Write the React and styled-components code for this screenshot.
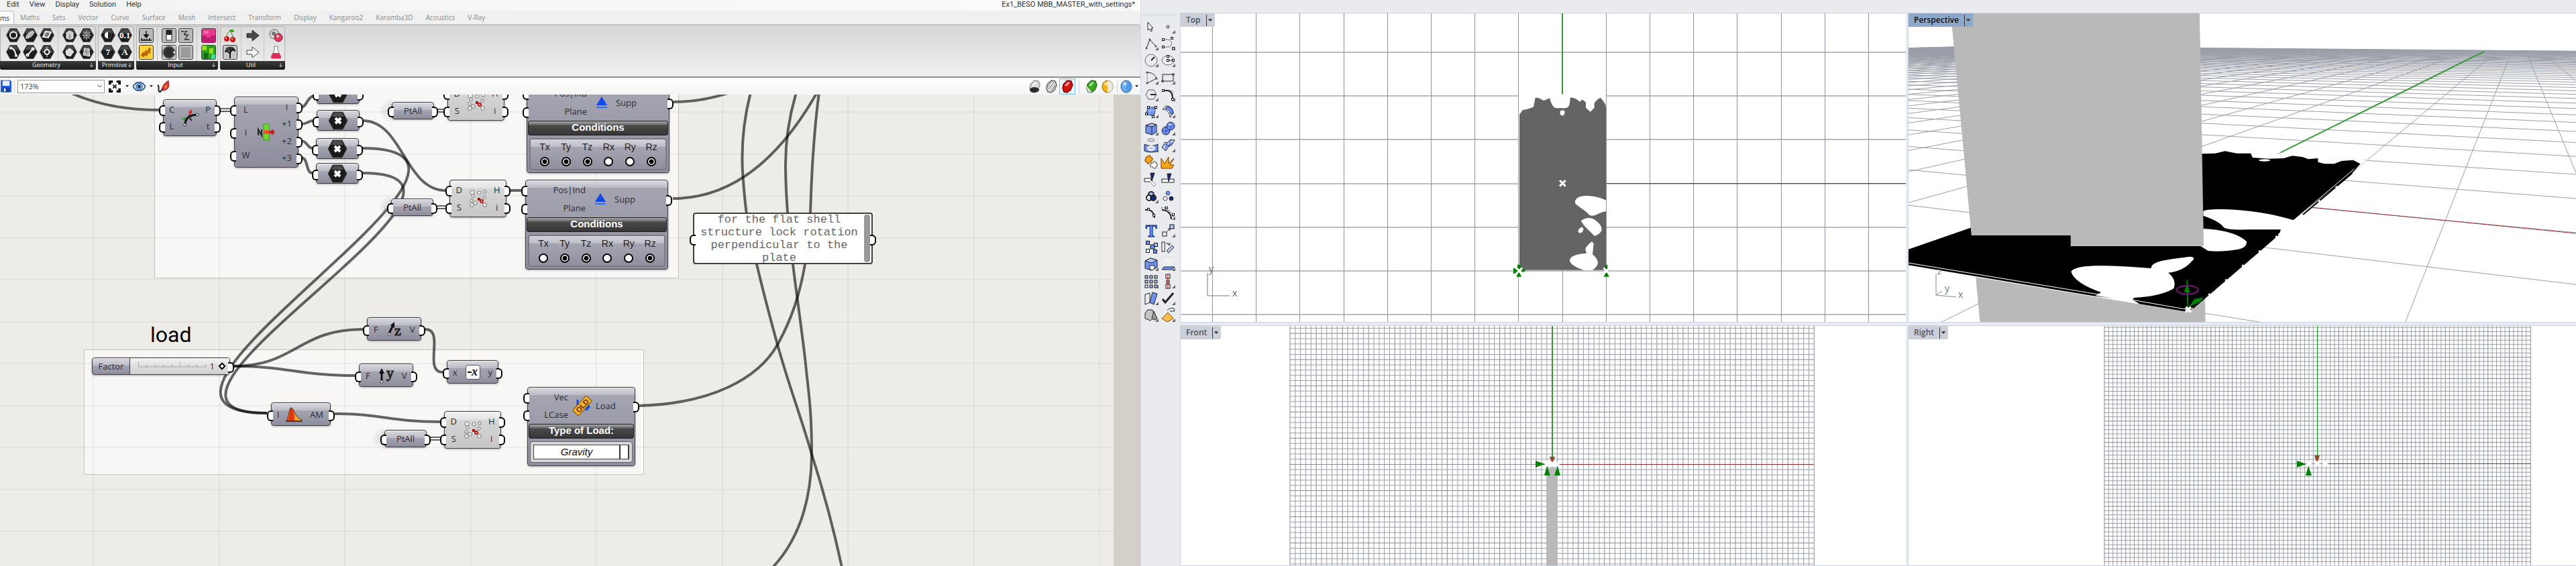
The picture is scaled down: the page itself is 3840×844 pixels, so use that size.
import React from "react";
import styled, { createGlobalStyle, css } from "styled-components";

const GlobalStyle = createGlobalStyle`
  * {
    box-sizing: border-box;
  }
  body {
    margin: 0;
    font-family: "Open Sans", sans-serif;
    background: #e9ebef;
  }
  button, input, select {
    font: inherit;
    color: inherit;
    margin: 0;
    padding: 0;
  }
  svg {
    display: block;
  }
`;

const Desktop = styled.div`
  display: flex;
  min-height: 100vh;
  overflow: hidden;
`;

/* ---------- Grasshopper window ---------- */

const Editor = styled.section`
  flex: 1700 1 0;
  min-width: 0;
  display: flex;
  flex-direction: column;
  background: #f0f0f0;
  border-right: 1px solid #d5d8de;
`;

const MenuBar = styled.nav`
  display: flex;
  align-items: flex-start;
  gap: 15px;
  height: 16px;
  padding: 0 8px 0 10px;
  font: 11px/13px Roboto, sans-serif;
  color: #333;
  background: linear-gradient(90deg, #f2f2f2, #fcfcfc);
`;

const MenuLink = styled.a`
  color: inherit;
  text-decoration: none;
`;

const FileName = styled.span`
  margin-left: auto;
`;

const TabBar = styled.div`
  display: flex;
  align-items: center;
  gap: 19px;
  height: 20px;
`;

const Tab = styled.button`
  border: 0;
  background: none;
  font-size: 10px;
  line-height: 20px;
  color: #8a8a8a;
  ${({ $active }) =>
    $active &&
    css`
      width: 21px;
      margin-right: -10px;
      color: #333;
      text-align: left;
      background: #fcfcfc;
      border: 1px solid #bbb;
      border-width: 1px 1px 0 0;
      border-radius: 0 4px 0 0;
    `}
`;

const Ribbon = styled.div`
  display: flex;
  align-items: flex-start;
  gap: 3px;
  height: 78px;
  padding-top: 1px;
  border-top: 2px solid #c2c2c2;
  border-radius: 0 4px 0 0;
  background: linear-gradient(#d6d6d6, #f0f0f0);
`;

const RibbonGroup = styled.div`
  border-radius: 3px;
  background: linear-gradient(#dadada, #f0f0f0);
  box-shadow: inset 0 0 0 1px #b2b2b2;
  overflow: hidden;
`;

const GroupBody = styled.div`
  display: flex;
  height: 52px;
  padding: 1px 2px 0 ${({ $first }) => ($first ? 7 : 2)}px;
`;

const IconBlock = styled.div`
  display: grid;
  grid-template-rows: 25px 25px;
  grid-auto-columns: 25px;
  grid-auto-flow: column;
  & + & {
    margin-left: 4px;
    padding-left: 4px;
    border-left: 1px solid #c6c6c6;
  }
`;

const IconButton = styled.button`
  display: flex;
  align-items: center;
  justify-content: center;
  border: 0;
  background: none;
`;

const GroupLabel = styled.div`
  display: flex;
  align-items: center;
  height: 13px;
  padding: 0 4px 1px;
  font-size: 9px;
  line-height: 12px;
  color: #f2f2f2;
  background: linear-gradient(#3a3a3a, #1c1c1c);
  span {
    flex: 1;
    text-align: center;
  }
`;

const ToolStrip = styled.div`
  display: flex;
  align-items: center;
  height: 27px;
  border-top: 2px solid #8d8d8d;
  background: linear-gradient(#fff, #f4f4f4);
`;

const ZoomBox = styled.label`
  display: flex;
  align-items: center;
  width: 130px;
  height: 20px;
  margin: 0 5px 0 2px;
  padding: 0 3px;
  border: 1px solid #999;
  background: #fff;
  font-size: 11px;
  color: #444;
  select {
    flex: 1;
    appearance: none;
    border: 0;
    background: none;
  }
`;

const StripButton = styled(IconButton)`
  width: ${({ $w }) => $w || 22}px;
  height: 24px;
  border: 1px solid ${({ $active }) => ($active ? "#79bdea" : "transparent")};
  background: ${({ $active }) => ($active ? "#eaf5fd" : "none")};
`;

const Divider = styled.span`
  width: 1px;
  height: 20px;
  margin: 0 ${({ $gap }) => $gap || 4}px;
  background: #d0d0d0;
`;

const RightTools = styled.div`
  display: flex;
  align-items: center;
  margin-left: auto;
  padding-right: 2px;
`;

const Workspace = styled.main`
  flex: 1;
  position: relative;
  overflow: hidden;
  background: #edece8;
  border-right: 40px solid #d4d0c8;
`;

const WireLayer = styled.svg`
  position: absolute;
  inset: 0;
  width: 100%;
  height: 100%;
`;

/* everything dropped on the canvas has its own free position */
const placed = css`
  position: absolute;
  left: ${({ $x }) => $x}px;
  top: ${({ $y }) => $y}px;
  width: ${({ $w }) => $w}px;
  height: ${({ $h }) => $h}px;
`;

const GroupBox = styled.div`
  ${placed}
  background: rgba(255, 255, 255, 0.6);
  border: 1px solid #c3c3c1;
`;

const Caption = styled.h2`
  ${placed}
  margin: 0;
  font: 400 32px/32px Roboto, sans-serif;
  color: #000;
`;

const NodeBox = styled.div`
  ${placed}
  display: flex;
  flex-direction: column;
  border: 1px solid #3e3e42;
  border-radius: 4px;
  font-size: 13px;
  line-height: 16px;
  color: #2b2b30;
  box-shadow: 0 1px 3px rgba(0, 0, 0, 0.3), inset 0 1px 0 rgba(255, 255, 255, 0.6);
  background: ${({ $light }) =>
    $light
      ? "linear-gradient(#f2f2f2, #e2e2e2 12px, #d6d6d6 12px, #c6c6c6)"
      : "linear-gradient(#d9d9df, #bbbbc5 11px, #a5a5b2 11px, #8e8d9d)"};
`;

const NodeTop = styled.div`
  flex: 1;
  display: flex;
  padding: 1px 0;
`;

const Ports = styled.ul`
  display: flex;
  flex-direction: column;
  margin: 0;
  padding: 0;
  list-style: none;
  ${({ $width }) => ($width ? `flex: 0 0 ${$width}px;` : "flex: 1;")}
`;

const Port = styled.li`
  position: relative;
  flex: 1;
  display: flex;
  align-items: center;
  justify-content: ${({ $align }) => $align || "center"};
  &::before {
    content: "";
    position: absolute;
    ${({ $side }) => $side}: -7px;
    top: calc(50% - 6px);
    width: 7px;
    height: 12px;
    border: 2px solid #000;
    border-${({ $side }) => ($side === "left" ? "right" : "left")}: 0;
    border-radius: ${({ $side }) => ($side === "left" ? "6px 0 0 6px" : "0 6px 6px 0")};
    background: #fff;
  }
`;

const NodeIcon = styled.div`
  flex: 0 0 ${({ $width }) => $width || 30}px;
  display: flex;
  align-items: center;
  justify-content: center;
`;

const NodeHeading = styled.div`
  height: 22px;
  margin: 0 1px;
  border: 1px solid #1d1d1d;
  border-radius: 3px;
  font: bold 15px/18px "Liberation Sans", sans-serif;
  text-align: center;
  color: #fff;
  background: linear-gradient(#a8a8a8, #6a6a6a 5px, #4a4a4a 6px, #363636);
`;

const ConditionPanel = styled.fieldset`
  display: grid;
  grid-template-columns: repeat(6, 1fr);
  height: 48px;
  min-width: 0;
  margin: 4px 3px 3px;
  padding: 4px 5px 0;
  border: 2px solid #7b7b84;
  border-radius: 4px;
  background: linear-gradient(#d4d4da, #bdbdc7 11px, #a5a5b2 11px, #908f9f);
`;

const Condition = styled.label`
  display: flex;
  flex-direction: column;
  align-items: center;
  gap: 8px;
  font: 14px/14px "Liberation Sans", sans-serif;
  color: #222;
  input {
    appearance: none;
    width: 14px;
    height: 14px;
    border: 2px solid #000;
    border-radius: 50%;
    background: #fff;
  }
  input:checked {
    background: radial-gradient(#000 0 3px, #fff 4px);
  }
`;

const LoadPanel = styled.div`
  display: flex;
  height: 32px;
  margin: 4px 3px 4px;
  padding: 4px;
  border: 1px solid #66666a;
  border-radius: 4px;
  background: #d6d6d6;
`;

const LoadSelect = styled.label`
  flex: 1;
  display: flex;
  border: 1px solid #444;
  background: #fff;
  font: italic 15px/20px "Liberation Sans", sans-serif;
  color: #111;
  select {
    flex: 1;
    appearance: none;
    border: 0;
    background: none;
    text-align-last: center;
  }
  span {
    width: 14px;
    border: 1px solid #333;
    border-width: 0 1px 0 2px;
  }
`;

const SliderName = styled.label`
  width: 56px;
  text-align: center;
  line-height: 24px;
  border-right: 1px solid #3e3e42;
`;

const SliderBox = styled(NodeBox)`
  flex-direction: row;
`;

const SliderTrack = styled.div`
  position: relative;
  flex: 1;
  background: linear-gradient(#f4f4f4, #dedede 12px, #cfcfcf);
  border-radius: 0 3px 3px 0;
  svg {
    position: absolute;
    left: 12px;
    top: 5px;
  }
  output {
    position: absolute;
    right: 22px;
    top: 4px;
  }
  input {
    appearance: none;
    position: absolute;
    inset: 0 7px 0 10px;
    background: none;
  }
  input::-webkit-slider-thumb {
    appearance: none;
    width: 8px;
    height: 8px;
    border: 2px solid #000;
    background: #fff;
    transform: rotate(45deg);
  }
`;

const SliderPort = styled(Ports)`
  flex: 0 0 0;
`;

const Note = styled.div`
  ${placed}
  display: flex;
  align-items: center;
  border: 2px solid #3f3f3f;
  border-radius: 4px;
  background: #fff;
  p {
    flex: 1;
    margin: 0;
    font: 17px/19px "Liberation Mono", monospace;
    text-align: center;
    color: #666;
  }
`;

const NoteScroll = styled.span`
  width: 9px;
  height: 71px;
  margin: 0 1px;
  border-radius: 4px;
  background: #999;
`;

/* ---------- Rhino window ---------- */

const ToolRail = styled.aside`
  flex: 0 0 58px;
  padding: 20px 6px 0 2px;
  background: #e9ebef;
`;

const Grip = styled.div`
  height: 4px;
  margin-bottom: 3px;
  border: 1px solid #d0d8e6;
  border-width: 1px 0;
`;

const ToolSection = styled.div`
  display: grid;
  grid-template-columns: 25px 25px;
  grid-auto-rows: 25px;
  margin-bottom: 1px;
`;

const Rhino = styled.section`
  flex: 2081 1 0;
  min-width: 0;
  display: grid;
  grid-template-columns: 1082fr 996fr;
  grid-template-rows: 462fr 359fr;
  gap: 4px 3px;
  padding-top: 19px;
  background: #e9ebef;
`;

const View = styled.article`
  position: relative;
  min-width: 0;
  min-height: 0;
  overflow: hidden;
  border: 1px solid #c9d2e2;
  border-right: 0;
  background: #fff;
`;

const ViewTab = styled.button`
  position: absolute;
  left: 0;
  top: 0;
  display: flex;
  align-items: center;
  height: 20px;
  padding-left: 8px;
  border: 0;
  border-radius: 0 0 3px 0;
  font-size: 12px;
  font-weight: 600;
  line-height: 18px;
  color: ${({ $active }) => ($active ? "#111" : "#50535a")};
  background: ${({ $active }) => ($active ? "#8da8cb" : "#cbd0d8")};
  svg {
    margin-left: 8px;
    border-left: 1px solid #333;
  }
`;

const Drawing = styled.svg`
  position: absolute;
  inset: 0;
  width: 100%;
  height: 100%;
`;

/* ---------- ribbon icons ---------- */

const Hex = ({ children }) => (
  <svg width="22" height="21" viewBox="0 0 22 21">
    <path d="M6 0.5h10l5.500 10-5.500 10h-10l-5.500-10z" fill="#1d1d1d" stroke="#555" />
    <path d="M6.500 1.500h9l3 6h-15z" fill="#4a4a4a" />
    <g fill="none" stroke="#f3f3f3" strokeWidth="2">{children}</g>
  </svg>
);

const Tile = ({ fill = "#b9b9b9", children }) => (
  <svg width="22" height="22" viewBox="0 0 22 22">
    <rect x="0.500" y="0.500" width="21" height="21" rx="2" fill={fill} stroke="#444" />
    {children}
  </svg>
);

const HexText = ({ children }) => (
  <text x="11" y="15" fontSize="13" fontWeight="bold" fontFamily="Liberation Serif, serif" textAnchor="middle" fill="#fff" stroke="none">
    {children}
  </text>
);

const geometryA = [
  ["Circle", <Hex><ellipse cx="11" cy="10.500" rx="5" ry="5" /></Hex>],
  ["Arc", <Hex><path d="M7 4c5 2 7 6 8 12" /><circle cx="7" cy="4.500" r="1" /><circle cx="15" cy="16" r="1" /></Hex>],
  ["Ellipse", <Hex><path d="M5 15c-1-5 7-12 11-10 2 2-3 9-9 10z" fill="#aaa" strokeWidth="1" /><path d="M8 13c0-3 4-6 6-6" strokeWidth="1" /></Hex>],
  ["Line", <Hex><path d="M8 14l6-7" /><circle cx="7" cy="15" r="1.500" /><circle cx="15" cy="6" r="1.500" /></Hex>],
  ["Plane", <Hex><path d="M5 13l4-8 8 1-4 8z" fill="#777" /></Hex>],
  ["Point", <Hex><circle cx="11" cy="10.500" r="3.500" /><path d="M11 3v4M11 14v4M4 10h3M15 10h3" strokeWidth="1" /></Hex>],
];
const geometryB = [
  ["Box", <Hex><path d="M6 7l5-3 5 3v8l-5 2-5-2z" fill="#ccc" stroke="#eee" strokeWidth="1" /><path d="M11 9v8" stroke="#666" strokeWidth="1" /></Hex>],
  ["Brep", <Hex><path d="M5 9l6-4 6 5-5 7-6-2z" fill="#ddd" strokeWidth="1" /></Hex>],
  ["Mesh", <Hex><path d="M11 3v15M4 10.500h14M6 5l10 11M16 5l-10 11M7 8l4-2 4 2v5l-4 2-4-2z" strokeWidth="1" stroke="#bbb" /></Hex>],
  ["Surface", <Hex><path d="M6 15l2-10 7 1 1 11z" fill="#bbb" strokeWidth="1" /><path d="M11 5v11M7 10h9" stroke="#777" strokeWidth="1" /></Hex>],
];
const primitives = [
  ["Boolean", <Hex><circle cx="11" cy="10.500" r="5" fill="#fff" stroke="none" /><path d="M11 5.500a5 5 0 0 1 0 10z" fill="#222" stroke="none" /></Hex>],
  ["Integer", <Hex><HexText>7</HexText></Hex>],
  ["Number", <Hex><HexText>0.1</HexText></Hex>],
  ["Text", <Hex><HexText>A</HexText></Hex>],
];
const inputA = [
  ["Number Slider", <Tile><path d="M11 4v9M8 10l3 4 3-4zM3 18h16M4 18v-3M8 18v-2M12 18v-2M16 18v-3" stroke="#111" strokeWidth="1.500" /></Tile>],
  ["Panel", <Tile fill="#ffd23a"><path d="M4 17c1-3 2-6 3-5s-2 6 0 5 2-8 4-8-2 8 0 7 3-10 5-11-2 9 1 7" fill="none" stroke="#b86400" strokeWidth="2" /></Tile>],
];
const inputB = [
  ["Boolean Toggle", <Tile><rect x="7" y="3" width="8" height="15" fill="#fff" stroke="#222" /><rect x="7" y="3" width="8" height="7" fill="#222" /></Tile>],
  ["Control Knob", <Tile fill="#d2d2d2"><circle cx="11" cy="11" r="9" fill="#2e2e2e" stroke="#777" strokeWidth="2" /><path d="M16 11l4-2v4z" fill="#eee" /></Tile>],
  ["Graph", <Tile><path d="M4 5h8l-4 5h6l-4 7h7" fill="none" stroke="#444" strokeWidth="2" strokeDasharray="4 1" /></Tile>],
  ["Value List", <Tile><path d="M4 6h14M4 11h14M4 16h14" stroke="#555" strokeWidth="3" /><path d="M4 6h14M4 11h14M4 16h14" stroke="#eee" strokeWidth="1" /></Tile>],
];
const inputC = [
  ["Colour Swatch", <Tile fill="#e8398e"><path d="M1 11h5l2 3h5l2-3h6v10h-20z" fill="#c01b72" /><path d="M4 4h7v4h-7z" fill="#ff6db0" /></Tile>],
  ["Image Sampler", <Tile fill="#2f9e20"><path d="M1 1h7v7h-7zM12 5h6v8h-6z" fill="#8fe01a" /><path d="M4 12h6v9h-6z" fill="#116d1a" /><path d="M15 14h6v7h-6z" fill="#39df9a" /></Tile>],
];
const utilA = [
  ["Cherry Picker", <svg width="22" height="22" viewBox="0 0 22 22"><path d="M10 3c4-3 7 0 7 3-3 0-6 0-7-3z" fill="#3aa51c" /><path d="M11 4c-4 3-5 6-5 10M11 4c2 4 4 6 4 10" fill="none" stroke="#3a6a1a" /><circle cx="6" cy="16" r="4" fill="#d31414" /><circle cx="15" cy="17" r="4" fill="#d31414" /><circle cx="5" cy="15" r="1" fill="#fff" /><circle cx="14" cy="16" r="1" fill="#fff" /></svg>],
  ["Param Viewer", <Tile fill="#c8c8c8"><path d="M11 20v-10M11 13l-5-5M11 11l5-6M11 9v-6M7 9l-4 1M15 7l4 2" stroke="#111" strokeWidth="2" /><path d="M4 7c0-5 14-6 14 0-1 4-3 0-7 1s-6 2-7-1z" fill="#222" opacity="0.800" /></Tile>],
];
const utilB = [
  ["Data Output", <svg width="22" height="22" viewBox="0 0 22 22"><path d="M2 8h8v-5l10 8-10 8v-5h-8z" fill="#4b4b4b" stroke="#222" /></svg>],
  ["Data Input", <svg width="22" height="22" viewBox="0 0 22 22"><path d="M2 8h8v-5l10 8-10 8v-5h-8z" fill="#f4f4f4" stroke="#444" /></svg>],
];
const utilC = [
  ["Cluster", <svg width="22" height="22" viewBox="0 0 22 22"><circle cx="9" cy="9" r="7" fill="#d9d9d9" stroke="#555" /><circle cx="8" cy="8" r="3" fill="#777" /><circle cx="15" cy="14" r="6" fill="#e0365f" stroke="#7d1030" /><circle cx="14" cy="12" r="2" fill="#ffd5e0" /></svg>],
  ["Galapagos", <svg width="22" height="22" viewBox="0 0 22 22"><path d="M9 2h5v6l5 10q0 2-2 2h-11q-2 0-2-2l5-10z" fill="#fff" stroke="#777" /><path d="M7 12h9l3 6q0 2-2 2h-11q-2 0-2-2z" fill="#e02c5c" /></svg>],
];

const ribbonGroups = [
  { name: "Geometry", first: true, blocks: [geometryA, geometryB] },
  { name: "Primitive", blocks: [primitives] },
  { name: "Input", blocks: [inputA, inputB, inputC] },
  { name: "Util", blocks: [utilA, utilB, utilC] },
];

const menus = ["Edit", "View", "Display", "Solution", "Help"];
const tabs = ["Maths", "Sets", "Vector", "Curve", "Surface", "Mesh", "Intersect", "Transform", "Display", "Kangaroo2", "Karamba3D", "Acoustics", "V-Ray"];

const Caret = () => (
  <svg width="5" height="3" viewBox="0 0 5 3"><path d="M0 0h5l-2.500 3z" fill="#222" /></svg>
);

const Gem = ({ fill, dark, children }) => (
  <svg width="18" height="20" viewBox="0 0 18 20">
    <path d="M3 7l6-6 6 1 2 6-3 7-5 4-5-1-2-5z" fill={fill} stroke={dark} strokeWidth="1.500" />
    <path d="M5 8l5-5 3 1-5 6z" fill="#fff" opacity="0.600" />
    {children}
  </svg>
);

const Ball = ({ left, right, stroke }) => (
  <svg width="18" height="20" viewBox="0 0 18 20">
    <ellipse cx="9" cy="10" rx="8" ry="9" fill={left} stroke={stroke} />
    <path d="M9 1a8 9 0 0 1 0 18z" fill={right} />
    <ellipse cx="7" cy="6" rx="3" ry="3" fill="#fff" opacity="0.500" />
  </svg>
);

/* ---------- node icons ---------- */

const ParamHex = () => (
  <svg width="30" height="28" viewBox="0 0 30 28">
    <path d="M8 1h14l7 13-7 13h-14l-7-13z" fill="#1b1b1b" stroke="#444" />
    <path d="M9 2h12l3 6h-18z" fill="#4c4c4c" />
    <path d="M11 10l8 8M19 10l-8 8" stroke="#fff" strokeWidth="4" />
  </svg>
);

const CurveIcon = () => (
  <svg width="28" height="28" viewBox="0 0 28 28">
    <path d="M12 13L15 4" stroke="#d22" strokeWidth="2" /><path d="M12 5l5-4v7z" fill="#d22" />
    <path d="M12 13l-6 2" stroke="#2a2" strokeWidth="2" strokeDasharray="4 1" /><path d="M1 16l6-4v5z" fill="#2a2" />
    <path d="M7 24c0-8 4-14 17-15" fill="none" stroke="#111" strokeWidth="3" />
    <path d="M12 12l5 6" stroke="#333" strokeWidth="2" />
    <circle cx="7" cy="24" r="2" fill="#fff" stroke="#222" /><circle cx="25" cy="9" r="2" fill="#fff" stroke="#222" />
  </svg>
);

const ListIcon = () => (
  <svg width="28" height="28" viewBox="0 0 28 28">
    <path d="M2 19v-9l5 9v-9" fill="none" stroke="#222" strokeWidth="2" />
    <rect x="10" y="2" width="8" height="24" fill="#6fdc2a" stroke="#3d9a12" />
    <rect x="10" y="11" width="8" height="6" fill="#f2552a" />
    <path d="M18 12h4v-3l5 5-5 5v-3h-4z" fill="#c32117" />
  </svg>
);

const ClosestIcon = () => (
  <svg width="28" height="28" viewBox="0 0 28 28">
    <g fill="#f0f0f0" stroke="#777">
      <rect x="2" y="2" width="6" height="6" rx="2" /><rect x="4" y="8" width="4" height="4" rx="1" />
      <rect x="13" y="3" width="5" height="5" rx="2" /><rect x="22" y="2" width="4" height="4" rx="1" />
      <rect x="21" y="10" width="4" height="4" rx="1" /><rect x="2" y="15" width="4" height="4" rx="1" />
      <rect x="2" y="21" width="5" height="5" rx="1" /><rect x="7" y="18" width="5" height="5" rx="2" />
      <rect x="21" y="21" width="5" height="5" rx="1" />
    </g>
    <rect x="13" y="13" width="4" height="4" fill="#a11" />
    <circle cx="19" cy="18" r="2" fill="#fff" stroke="#b11" strokeWidth="2" />
  </svg>
);

const SupportIcon = () => (
  <svg width="18" height="18" viewBox="0 0 18 18">
    <path d="M9 0l8 13h-16z" fill="#0f49ee" /><path d="M1 16h16" stroke="#2f6bff" strokeWidth="2" />
  </svg>
);

const AxisIcon = ({ letter, slanted }) => (
  <svg width="26" height="24" viewBox="0 0 26 24">
    <path d={slanted ? "M5 18L11 6" : "M6 20V6"} stroke="#111" strokeWidth="3" />
    <path d={slanted ? "M7 6l6-5 0 9z" : "M2 9l4-8 4 8z"} fill="#111" />
    <circle cx={slanted ? 5 : 6} cy={slanted ? 19 : 21} r="2" fill="#fff" stroke="#333" />
    <text x="13" y={slanted ? 21 : 15} fontSize="22" fontFamily="Liberation Serif, serif" fill="#222" stroke="#222">{letter}</text>
  </svg>
);

const NegativeIcon = () => (
  <svg width="22" height="22" viewBox="0 0 22 22">
    <rect x="0.500" y="0.500" width="21" height="21" rx="3" fill="#f6f6f6" stroke="#555" />
    <path d="M3 11h6" stroke="#111" strokeWidth="2" />
    <text x="9" y="16" fontSize="18" fontStyle="italic" fontWeight="bold" fontFamily="Liberation Serif, serif" fill="#111">x</text>
  </svg>
);

const BellIcon = () => (
  <svg width="26" height="24" viewBox="0 0 26 24">
    <path d="M1 22c5-3 4-20 8-20 5 0 4 14 16 18v2z" fill="#ffac12" stroke="#333" />
    <path d="M2 21c5-3 4-18 7-18 3 0 4 5 5 10v8z" fill="#ef3a12" />
    <path d="M9 3v18" stroke="#7a1000" strokeDasharray="2 1" /><path d="M1 22h24" stroke="#333" strokeWidth="2" />
  </svg>
);

const OldIcon = () => (
  <svg width="30" height="30" viewBox="0 0 30 30">
    <path d="M8 6v14M12 16h14M20 22l6-6" stroke="#1150e8" strokeWidth="3" />
    <g transform="rotate(-48 15 15)">
      <rect x="0" y="9" width="30" height="12" rx="2" fill="#f6b42c" stroke="#7c4a08" />
      <text x="15" y="19" fontSize="11" fontWeight="bold" textAnchor="middle" fontFamily="Liberation Sans, sans-serif" fill="#6c2b10">OLD</text>
    </g>
  </svg>
);

/* ---------- nodes ---------- */

const Node = ({ x, y, w, h, light, inputs = [""], outputs = [""], icon, iconWidth, label, inWidth, align, children }) => (
  <NodeBox $x={x} $y={y} $w={w} $h={h} $light={light}>
    <NodeTop>
      <Ports $width={inWidth}>
        {inputs.map((name, i) => <Port key={i} $side="left" $align={align && "flex-end"}>{name}</Port>)}
      </Ports>
      <NodeIcon $width={iconWidth}>{icon || label}</NodeIcon>
      <Ports>
        {outputs.map((name, i) => <Port key={i} $side="right" $align={align && "flex-start"}>{name}</Port>)}
      </Ports>
    </NodeTop>
    {children}
  </NodeBox>
);

const Support = ({ x, y, fixed }) => (
  <Node x={x} y={y} w={213} h={134} inputs={["Pos|Ind", "Plane"]} outputs={["Supp"]} icon={<SupportIcon />} inWidth={89} iconWidth={43} align>
    <NodeHeading>Conditions</NodeHeading>
    <ConditionPanel>
      {["Tx", "Ty", "Tz", "Rx", "Ry", "Rz"].map((name) => (
        <Condition key={name}>
          {name}
          <input type="checkbox" defaultChecked={fixed.includes(name)} />
        </Condition>
      ))}
    </ConditionPanel>
  </Node>
);

const closest = [[667, -17], [670, 127], [662, 472]];
const params = [[472, -17], [472, 23], [471, 65], [471, 102]];
const relays = [[584, 11], [583, 155], [573, 500]];

const pairs = ["M329 162H343M329 166H343", "M651 163H661M651 167H661", "M650 307H665M650 311H665", "M640 652H657M640 656H657"];
const wires = [
  "M92 132C140 157 190 164 237 164",
  "M449 160C457 160 458 144 468 143",
  "M449 185C458 185 460 180 467 180",
  "M449 210C458 210 458 221 466 221",
  "M449 235C460 235 455 258 466 258",
  "M541 180C600 180 604 284 664 284",
  "M540 221C827 221 111 616 398 616",
  "M540 258C800 258 138 616 398 616",
  "M760 284H777",
  "M348 546C440 546 445 491 541 491",
  "M348 546C430 546 445 560 529 560",
  "M634 491C664 491 630 555 660 555",
  "M499 617C570 617 580 629 656 629",
  "M1004 152C1035 152 1060 147 1085 139",
  "M1003 296C1090 296 1160 240 1218 138",
  "M953 605C1060 602 1130 565 1159 514C1180 476 1192 440 1200 394C1205 360 1207 335 1208 317C1210 250 1214 190 1221 138",
  "M1119 138C1108 180 1104 225 1108 270C1112 325 1118 355 1128 394C1137 432 1148 474 1159 514C1176 575 1195 625 1209 674C1227 730 1243 790 1255 846",
  "M1187 138C1176 175 1171 210 1171 245C1171 290 1176 350 1182 394C1186 430 1198 510 1202 553C1206 590 1210 615 1210 679C1209 750 1190 805 1152 846",
];

const columns = Array.from({ length: 9 }, (_, i) => Math.round(139 + i * 187.5));
const rows = Array.from({ length: 12 }, (_, i) => Math.round(167 + i * 62.5));

const Canvas = () => (
  <Workspace>
    <GroupBox $x={230} $y={-10} $w={782} $h={284} />
    <GroupBox $x={125} $y={380} $w={835} $h={187} />
    <WireLayer>
      <g transform="translate(0 -141)" fill="none">
        <g stroke="rgba(60,60,40,0.06)" strokeWidth="2">
          {columns.map((x) => <path key={x} d={`M${x} 141V2000`} />)}
          {rows.map((y) => <path key={y} d={`M0 ${y}H1660`} />)}
        </g>
        <g stroke="rgba(0,0,0,0.6)">
          {pairs.map((d) => <path key={d} d={d} strokeWidth="2" />)}
          {wires.map((d) => <path key={d} d={d} strokeWidth="4" />)}
        </g>
        <g stroke="#999">
          {relays.map(([x, y]) =>
            [7, 10, 13, 16].map((r, i) => (
              <path key={`${x}-${y}-${r}`} opacity={0.8 - i * 0.2} d={`M${x} ${y + 154 - r}a${r} ${r} 0 0 0 0 ${2 * r}`} />
            ))
          )}
        </g>
      </g>
    </WireLayer>

    <Node x={243} y={7} w={80} h={55} inputs={["C", "L"]} outputs={["P", "t"]} icon={<CurveIcon />} />
    <Node x={349} y={3} w={96} h={106} inputs={["L", "i", "W"]} outputs={["i", "+1", "+2", "+3"]} icon={<ListIcon />} iconWidth={28} />
    {params.map(([x, y]) => <Node key={y} x={x} y={y} w={64} h={31} icon={<ParamHex />} />)}
    {relays.map(([x, y]) => <Node key={y} x={x} y={y} w={63} h={26} label="PtAll" iconWidth={40} />)}
    {closest.map(([x, y]) => (
      <Node key={y} x={x} y={y} w={85} h={56} light inputs={["D", "S"]} outputs={["H", "i"]} icon={<ClosestIcon />} />
    ))}
    <Support x={785} y={-17} fixed={["Tx", "Ty", "Tz", "Rz"]} />
    <Support x={783} y={127} fixed={["Ty", "Tz", "Rz"]} />

    <Caption $x={224} $y={342}>load</Caption>
    <SliderBox $x={137} $y={392} $w={206} $h={26}>
      <SliderName htmlFor="factor">Factor</SliderName>
      <SliderTrack>
        <svg width="102" height="9" viewBox="0 0 102 9">
          <path d="M0 8H102M0.500 0V8M12.500 4V8M25.500 4V8M37.500 4V8M50.500 4V8M62.500 0V8M75.500 4V8M87.500 4V8M100.500 4V8" stroke="#aaa" fill="none" />
        </svg>
        <output htmlFor="factor">1</output>
        <input id="factor" type="range" min="-1" max="1" defaultValue="1" />
      </SliderTrack>
      <SliderPort><Port $side="right" /></SliderPort>
    </SliderBox>
    <Node x={547} y={332} w={81} h={35} inputs={["F"]} outputs={["V"]} icon={<AxisIcon letter="z" slanted />} />
    <Node x={535} y={401} w={81} h={35} inputs={["F"]} outputs={["V"]} icon={<AxisIcon letter="y" />} />
    <Node x={666} y={396} w={77} h={35} inputs={["x"]} outputs={["y"]} icon={<NegativeIcon />} />
    <Node x={404} y={459} w={89} h={35} inputs={["I"]} outputs={["AM"]} icon={<BellIcon />} inWidth={19} iconWidth={28} />
    <Node x={786} y={436} w={161} h={118} inputs={["Vec", "LCase"]} outputs={["Load"]} icon={<OldIcon />} inWidth={60} iconWidth={41} align>
      <NodeHeading>Type of Load:</NodeHeading>
      <LoadPanel>
        <LoadSelect>
          <select aria-label="Type of Load"><option>Gravity</option></select>
          <span />
        </LoadSelect>
      </LoadPanel>
    </Node>
    <Note $x={1033} $y={176} $w={268} $h={77}>
      <Ports $width={1}><Port $side="left" /></Ports>
      <p>for the flat shell structure lock rotation perpendicular to the plate</p>
      <NoteScroll />
      <Ports $width={1}><Port $side="right" /></Ports>
    </Note>
  </Workspace>
);

/* ---------- Rhino tool icons, 24 x 24 ---------- */

const Sq = ({ x, y, fill = "#fff", s = 3 }) => (
  <rect x={x - s / 2} y={y - s / 2} width={s} height={s} fill={fill} stroke="#111" strokeWidth="1" />
);
const blue = "#6d90f2";
const pale = "#b4c8fb";
const navy = "#14287c";

const tools = [
  ["Select", <path d="M7 5v12l3-2 2 4 1.500-1-1.500-4h3z" fill="#fff" stroke="#222" />, false],
  ["Point", <circle cx="12" cy="12" r="2" />],
  ["Polyline", <><path d="M5 19L10 6L19 16" /><circle cx="5" cy="19" r="1" /><circle cx="10" cy="6" r="1" /><circle cx="19" cy="16" r="1" /></>],
  ["Curve", <><path d="M5 6h7c6 0 8 8 2 11h-9" stroke="#777" /><Sq x={5} y={6} /><Sq x={18} y={4} /><Sq x={5} y={17} /><Sq x={20} y={19} /></>],
  ["Circle", <><circle cx="12" cy="12" r="9" stroke="#666" /><path d="M12 12l5-5" strokeWidth="2" /></>],
  ["Ellipse", <><ellipse cx="12" cy="12" rx="9" ry="7" stroke="#666" /><path d="M12 12h8" /><Sq x={12} y={6} /><Sq x={12} y={12} /><Sq x={20} y={12} /></>],
  ["Arc", <><path d="M6 20V4" stroke="#999" /><path d="M6 4c8 0 12 4 14 9L6 20" /><circle cx="6" cy="4" r="1" /><circle cx="6" cy="20" r="1" /><circle cx="20" cy="13" r="1" /></>],
  ["Rectangle", <><rect x="4" y="7" width="16" height="10" /><Sq x={4} y={17} s={2} /><Sq x={20} y={7} s={2} /></>],
  ["Polygon", <><path d="M8 5h8l4 7-4 7H8l-4-7z" stroke="#555" /><path d="M11 12h8" strokeWidth="2" /></>],
  ["Fillet Curves", <><path d="M12 6h7v7" stroke="#aaa" /><path d="M5 6h6q8 0 8 13" strokeWidth="2" /><Sq x={5} y={6} /><Sq x={19} y={19} /></>],
  ["Surface From Points", <><path d="M8 6h11l-3 13-12-3z" fill={blue} stroke="#334" /><path d="M12 6l-3 11M7 11h11" stroke={pale} /><Sq x={8} y={6} /><Sq x={19} y={6} /><Sq x={5} y={16} /><Sq x={15} y={20} /></>],
  ["Loft", <><path d="M4 9l5-5c7 0 11 5 11 11l-5 6c0-7-4-12-11-12z" fill="#e8ecf5" /><path d="M8 8l4-3c6 2 8 6 8 10l-4 1c0-4-3-8-8-8z" fill={blue} stroke={navy} /></>],
  ["Box", <><path d="M4 7l9-3 7 2v11l-7 4-9-3z" fill={blue} /><path d="M4 7l9-3 7 2-7 3z" fill={pale} /><path d="M13 9v12" /></>],
  ["Boolean Union", <><circle cx="9" cy="15" r="6" fill={blue} /><circle cx="16" cy="8" r="6" fill={blue} /><path d="M3 15h12M9 9v12M10 8h12M16 2v12" stroke="#3457b8" /><circle cx="15" cy="6" r="2" fill={pale} stroke="none" /></>],
  ["Project Curves", <><ellipse cx="12" cy="4" rx="5" ry="2" stroke="#666" /><path d="M2 10q10 5 20 0v10q-10 4-20 0z" fill={blue} /><ellipse cx="12" cy="16" rx="5" ry="3" fill={pale} stroke="#fff" strokeWidth="2" /></>],
  ["Mesh Surface", <><path d="M3 15l5-8 3 1 5-5 6 1-5 8-3 0-5 8z" fill={pale} /><path d="M6 10l9 2M11 8l-3 10M16 3l-2 11M10 14l9-6" stroke="#3957b8" /></>],
  ["Join", <><path d="M4 4h3V2h4v3h3v4h-2v3h-3v2h-3v-3h-3v-4h1z" fill="#ffa417" stroke="#7a4a00" /><path d="M12 13h3v-2h4v3h2v4h-2v3h-4v-2h-4l-1-3h2z" fill="#fff" stroke="#555" /></>, false],
  ["Explode", <path d="M2 21V6l5 8L13 4v10l8-8-6 10h6l-3 5z" fill="#ffa813" stroke="#7a3a00" />, false],
  ["Trim", <><path d="M2 10h10v5H2z" fill="#fff" /><path d="M12 13l7 6-3 3-6-7" fill="#fff" stroke="#888" /><path d="M11 2h6l-4 12z" fill={navy} /></>, false],
  ["Split", <><rect x="3" y="11" width="18" height="5" fill="#fff" /><path d="M11 3h6l-4 12z" fill={navy} /></>, false],
  ["Group", <><circle cx="12" cy="9" r="4" fill={pale} strokeWidth="2" /><circle cx="9" cy="14" r="4" fill="#fff" strokeWidth="2" /><circle cx="15" cy="14" r="4" fill={navy} strokeWidth="2" /></>],
  ["Ungroup", <><circle cx="12" cy="7" r="3" fill={blue} stroke="#446" /><circle cx="8" cy="15" r="3" fill="#fff" stroke="#446" /><circle cx="17" cy="15" r="3" fill={navy} /></>, false],
  ["Edit Curve", <><path d="M3 7h4c6 0 10 6 10 12" strokeWidth="2" /><Sq x={8} y={6} /><Sq x={16} y={15} /></>, false],
  ["Edit Points", <><path d="M3 7c9 0 14 6 14 14" strokeWidth="2" /><path d="M2 4h8l10 11v5" strokeDasharray="2 2" /><Sq x={10} y={4} /><Sq x={20} y={14} /></>],
  ["Text", <text x="12" y="21" textAnchor="middle" fontFamily="Liberation Serif, serif" fontSize="25" fontWeight="bold" fill={blue} stroke={navy}>T</text>, false],
  ["Move", <><Sq x={7} y={17} s={6} /><Sq x={18} y={6} s={6} fill={pale} /><path d="M11 13l4-4M15 12V9h-3" /></>],
  ["Copy", <><Sq x={7} y={5} s={5} fill={blue} /><Sq x={7} y={17} s={5} /><Sq x={14} y={11} s={6} fill={blue} /><Sq x={19} y={8} s={5} fill={pale} /><Sq x={18} y={18} s={5} fill={blue} /></>, false],
  ["Rotate", <><rect x="3" y="4" width="4" height="14" fill="#fff" /><path d="M10 17l8-8 3 3-8 8z" fill={pale} /><path d="M9 6q4-1 6 2M15 5v3h-3" /></>, false],
  ["Boolean Difference", <><path d="M3 7l8-4 10 3v11l-9 4-9-3z" fill={blue} /><path d="M3 7l8-4 10 3-8 4z" fill={pale} /><path d="M10 14h7v5l-4 2-3-2z" fill="#fff" /></>],
  ["Project To Plane", <><path d="M6 16h16l-4 4H3z" fill={blue} /><path d="M7 14V6M12 14V6M17 14V6M5 7l2-3 2 3M10 7l2-3 2 3M15 7l2-3 2 3" stroke="#fff" /></>],
  ["Array", <>{[5, 12, 19].map((y) => [5, 12, 19].map((x) => <Sq key={`${x}${y}`} x={x} y={y} s={4} fill={x === 5 && y === 19 ? "#fff" : pale} />))}</>],
  ["Align", <><Sq x={12} y={4} s={6} /><Sq x={12} y={12} s={4} /><Sq x={12} y={19} s={6} /><path d="M12 2V22" stroke="#d22" strokeWidth="1.500" /></>],
  ["Offset Surface", <><path d="M3 6l7-2v14l-7 3z" fill="#eee" /><path d="M14 3l7 2-5 16-6-3z" fill={blue} /></>],
  ["Check", <path d="M4 13l4 5L20 4" strokeWidth="3" />],
  ["Solids", <><path d="M3 9l4-5h7l2 5v6l-5 5-8-3z" fill="#c4c4c4" /><path d="M16 6l5 11q-4 4-8 0z" fill="#9b9b9b" /></>],
  ["Render", <><path d="M12 8l8 9-9 5-8-5z" fill="#ffc04a" stroke="#7a4a00" /><path d="M11 5q4-5 10-3l1 4-7 0" fill="#eee" /></>],
];

const toolSections = Array.from({ length: 6 }, (_, i) => tools.slice(i * 6, i * 6 + 6));

/* ---------- viewports ---------- */

const Cross = ({ x, y }) => (
  <path d={`M${x - 4} ${y - 4}l8 8M${x + 4} ${y - 4}l-8 8`} stroke="#fff" strokeWidth="4" />
);

const TopView = () => (
  <Drawing>
    <g strokeWidth="1" shapeRendering="crispEdges">
      {Array.from({ length: 7 }, (_, i) => Math.round(58 + i * 65.2)).map((y) => <path key={y} d={`M0 ${y}H2000`} strokeWidth="2" stroke="#b8bcc5" />)}
      {Array.from({ length: 17 }, (_, i) => Math.round(47 + i * 65.2)).map((x) => <path key={x} d={`M${x} 0V462`} stroke="#8e939d" />)}
    </g>
    <rect x="504" y="121" width="130" height="262" fill="#fff" />
    <path d="M569 0V120" stroke="#3b9438" strokeWidth="2" />
    <path d="M635 253H2000" stroke="#8f2a2d" strokeWidth="1" shapeRendering="crispEdges" />
    <svg x="440" y="80" width="300" height="330" viewBox="0 0 900 990">
      <path
        fill="#646464"
        d="M195 212L210 192Q240 188 258 178L266 137L280 138L304 150L330 139C338 165 345 184 362 184H400C418 180 420 170 422 137Q440 133 465 155L476 145L492 158V182L512 200L530 182V162Q542 142 558 137L572 155Q582 168 582 180V596C550 580 500 570 465 580C440 590 440 608 450 615C480 640 495 645 508 662Q525 670 545 658Q565 648 582 645V908H522Q548 890 546 872Q540 852 522 838L527 790Q522 778 514 784Q485 810 491 820L495 833Q420 838 420 866Q425 890 484 908H195Z"
      />
      <g fill="#fff">
        <path d="M470 688Q500 665 530 682Q570 710 561 735Q545 755 530 755L483 708Z" />
        <path d="M460 725l14-10 8 8-5 16-14 4-6-8z" />
        <path d="M378 196l14-4 6 8-2 12-10 6-10-8z" />
      </g>
      <g fill="#008000">
        <path d="M168 898l26 14-26 14zM181 938l11-26 12 26zM186 884h14v20h-14zM204 906h16v10h-16z" />
        <path d="M572 938l12-26 12 26zM579 884h10v20h-10z" />
      </g>
      <g stroke="#fff" strokeWidth="9">
        <path d="M375 507l26 26M401 507l-26 26M181 899l26 26M207 899l-26 26M571 899l26 26M597 899l-26 26" />
      </g>
    </svg>
    <path d="M40 387V421H73" fill="none" stroke="#777" />
    <text x="42" y="386" fontSize="14" fill="#666">y</text>
    <text x="77" y="422" fontSize="14" fill="#666">x</text>
  </Drawing>
);

const Mesh = ({ x, pitch, cy }) => {
  const span = pitch * 100;
  const right = x + span;
  return (
    <g stroke="#9a9fa9" strokeWidth="1">
      {Array.from({ length: 101 }, (_, i) => (
        <path key={`v${i}`} d={`M${x + i * pitch} 0V${cy + span / 2}`} stroke={i % 5 ? undefined : "#858a94"} />
      ))}
      {Array.from({ length: 101 }, (_, i) => (
        <path key={`h${i}`} d={`M${x} ${cy + (i - 50) * pitch}H${right}`} stroke={i % 5 ? undefined : "#858a94"} />
      ))}
    </g>
  );
};

const FrontView = () => (
  <Drawing>
    <Mesh x={163} pitch={7.8125} cy={206.5} />
    <rect x="546" y="206" width="16" height="400" fill="#b9b9b9" />
    <path d="M554 0V196" stroke="#3b9438" strokeWidth="2" />
    <path d="M565 206.500H944" stroke="#8f2a2d" strokeWidth="1" />
    <Cross x={547} y={206} /><Cross x={554} y={206} /><Cross x={561} y={206} />
    <path d="M529 201l14 5-14 5zM542 223l4-14 5 14zM557 223l5-14 4 14z" fill="#008000" />
    <path d="M550 195h8l-2 6-2 2-2-2z" fill="#964a2a" />
  </Drawing>
);

const RightView = () => (
  <Drawing>
    <Mesh x={292} pitch={6.353} cy={205.5} />
    <path d="M609.500 0V194" stroke="#0ea015" strokeWidth="1" />
    <path d="M625 205.500H927" stroke="#8f2a2d" strokeWidth="1" />
    <Cross x={597} y={205} /><Cross x={609} y={205} /><Cross x={621} y={205} />
    <path d="M579 201l14 5-14 5zM592 223l4-14 5 14z" fill="#008000" />
    <path d="M605 193h8l-2 7-2 2-2-2z" fill="#964a2a" />
  </Drawing>
);

// ground plane: the horizon lies at y 150, both families run 50 cells deep
const acrossLines = Array.from({ length: 54 }, (_, i) => {
  const depth = i - 3 + 4.84;
  const d = 4193.4 / (depth + 19.23);
  const x = 1434 - 22.05 * d;
  return `M${x} ${150 + (2943 + 0.872 * x) / depth}L1600 ${150 + (2943 + 0.872 * 1600) / depth}`;
});
const awayLines = Array.from({ length: 101 }, (_, i) => {
  const slope = -1.045 + 0.42 * (i - 50);
  const d = 4193.4 / (54.84 - 0.872 * slope);
  return `M${1434 + slope * d} ${150 + d}L${1434 + slope * 1400} 1550`;
});

const PerspectiveView = () => (
  <Drawing viewBox="8 60 1560 1380" preserveAspectRatio="none">
    <g stroke="#9a9ea8" strokeWidth="1">
      {acrossLines.map((d) => <path key={d} d={d} vectorEffect="non-scaling-stroke" />)}
      {awayLines.map((d) => <path key={d} d={d} vectorEffect="non-scaling-stroke" />)}
    </g>
    <path d="M107 60H688L702 1440H175Z" fill="#b9b9b9" />
    <path d="M690 664L1080 716L704 1330L660 1396L8 1190V1110L155 1012Z" fill="#fff" />
    <path
      d="M8 1115L155 1018L400 850L694 688L725 686L748 676L775 686L808 686L812 705L850 710L885 708L905 697L930 703L942 712L965 708V725L980 733H1003L1020 720L1047 716L1064 733L1045 775L908 985C850 950 780 935 730 936Q700 938 697 945V965Q735 990 745 1018Q755 1030 800 1027H878L876 1040L662 1396L548 1360L535 1345L440 1324L8 1186Z"
      fill="#000"
    />
    <g fill="#fff">
      <path d="M697 1023Q770 1030 798 1080Q800 1105 780 1115Q740 1128 708 1122L690 1100Z" />
      <path d="M388 1215C400 1180 470 1185 575 1200C575 1165 620 1160 665 1148Q680 1150 672 1165Q650 1215 615 1220Q635 1250 628 1290Q600 1325 535 1332L530 1348L445 1322L458 1308Q395 1265 388 1215Z" />
      <ellipse cx="840" cy="717" rx="13" ry="5" />
    </g>
    <path d="M8 1176L455 1318M532 1342L658 1384M670 1380L878 1040M908 985L1050 755" fill="none" stroke="#fff" strokeWidth="1" vectorEffect="non-scaling-stroke" />
    <path d="M673 1378L872 1050M930 960L1045 775" fill="none" stroke="#000" strokeWidth="2" strokeDasharray="30 3" vectorEffect="non-scaling-stroke" />
    <path d="M107 60H688L698 1100H387V1053H155Z" fill="#b9b9b9" />
    <path d="M387 1099H692" stroke="#ddd" strokeWidth="1" vectorEffect="non-scaling-stroke" />
    <path d="M878 682L1354 230" stroke="#3b9b38" strokeWidth="2" vectorEffect="non-scaling-stroke" />
    <path d="M952 928L1568 1044" stroke="#9d2f32" strokeWidth="1" vectorEffect="non-scaling-stroke" />
    <path d="M659 1252L661 1375" stroke="#008000" strokeWidth="2" vectorEffect="non-scaling-stroke" />
    <path d="M659 1265l-7 42 14 2zM664 1372l12-34 20-8-6 20z" fill="#008000" />
    <ellipse cx="660" cy="1297" rx="25" ry="19" fill="none" stroke="#7a1479" strokeWidth="2" vectorEffect="non-scaling-stroke" />
    <path d="M656 1374L668 1396M668 1374L656 1396" stroke="#fff" strokeWidth="4" vectorEffect="non-scaling-stroke" />
  </Drawing>
);

const PerspectiveAxes = () => (
  <Drawing>
    <path d="M41 388V420L71 423M41 420L50 414" fill="none" stroke="#888" />
    <text x="43" y="389" fontSize="13" fill="#777">z</text>
    <text x="54" y="415" fontSize="14" fill="#777">y</text>
    <text x="74" y="424" fontSize="14" fill="#777">x</text>
  </Drawing>
);

const views = [
  { name: "Top", drawing: <TopView /> },
  { name: "Perspective", active: true, drawing: <><PerspectiveView /><PerspectiveAxes /></> },
  { name: "Front", drawing: <FrontView /> },
  { name: "Right", drawing: <RightView /> },
];

const App = () => {
  return (
    <>
      <GlobalStyle />
      <Desktop>
        <Editor>
          <MenuBar>
            {menus.map((name) => <MenuLink key={name} href="#">{name}</MenuLink>)}
            <FileName>Ex1_BESO MBB_MASTER_with_settings*</FileName>
          </MenuBar>
          <TabBar>
            <Tab $active>ms</Tab>
            {tabs.map((name) => <Tab key={name}>{name}</Tab>)}
          </TabBar>
          <Ribbon>
            {ribbonGroups.map((group) => (
              <RibbonGroup key={group.name}>
                <GroupBody $first={group.first}>
                  {group.blocks.map((block, i) => (
                    <IconBlock key={i}>
                      {block.map(([name, icon]) => <IconButton key={name} aria-label={name}>{icon}</IconButton>)}
                    </IconBlock>
                  ))}
                </GroupBody>
                <GroupLabel>
                  <span>{group.name}</span>
                  <svg width="5" height="7" viewBox="0 0 5 7"><path d="M2.500 0v5M0 3l2.500 3 2.500-3" stroke="#bbb" fill="none" /></svg>
                </GroupLabel>
              </RibbonGroup>
            ))}
          </Ribbon>
          <ToolStrip>
            <StripButton $w={19} aria-label="Save">
              <svg width="18" height="19" viewBox="0 0 18 19"><path d="M0 0h15l2 2v17H0z" fill="#1f5bd8" /><path d="M3 1h11v8H3z" fill="#e6eefb" /><path d="M3 12h11v7H3z" fill="#16418f" /><path d="M5 13h3v5H5z" fill="#dce8fa" /></svg>
            </StripButton>
            <Divider $gap={2} />
            <ZoomBox>
              <select aria-label="Zoom"><option>173%</option></select>
              <svg width="7" height="5" viewBox="0 0 7 5"><path d="M0 0.500l3.500 3.500L7 0.500" fill="none" stroke="#444" /></svg>
            </ZoomBox>
            <StripButton $w={20} aria-label="Zoom extents">
              <svg width="20" height="20" viewBox="0 0 20 20"><path d="M2 7V2h5M13 2h5v5M18 13v5h-5M7 18H2v-5" fill="none" stroke="#111" strokeWidth="4" /><path d="M7 7l6 6M13 7l-6 6" stroke="#111" strokeWidth="2" /></svg>
            </StripButton>
            <StripButton $w={16} aria-label="Zoom options"><Caret /></StripButton>
            <StripButton $w={21} aria-label="Preview">
              <svg width="20" height="14" viewBox="0 0 20 14"><path d="M0 7q10-14 20 0-10 14-20 0z" fill="#fff" stroke="#2a4d84" strokeWidth="2" /><circle cx="10" cy="7" r="5" fill="#5ba4e6" stroke="#1c4f8f" /><circle cx="10" cy="7" r="2" fill="#111" /></svg>
            </StripButton>
            <StripButton $w={15} aria-label="Preview options"><Caret /></StripButton>
            <StripButton $w={22} aria-label="Sketch">
              <svg width="20" height="18" viewBox="0 0 20 18"><path d="M1 7c4 2-1 8 3 10 3 0 3-5 6-7" fill="none" stroke="#222" strokeWidth="2" /><path d="M9 15c-3-7 3-11 8-15 1 7 3 13-8 15z" fill="#e2303a" stroke="#8c1d1d" /><path d="M11 12c0-4 3-5 4-7 0 4 0 6-4 7z" fill="#ff9a2a" /></svg>
            </StripButton>
            <RightTools>
              <StripButton $w={26} aria-label="No preview"><Gem fill="#d9d9d9" dark="#999"><ellipse cx="9" cy="15" rx="7" ry="4" fill="#2c2c2c" /></Gem></StripButton>
              <StripButton $w={24} aria-label="Wireframe preview"><Gem fill="#dcdcdc" dark="#666"><path d="M5 14l8-10M9 17l6-9M2 12l9-10" stroke="#666" /></Gem></StripButton>
              <StripButton $w={24} $active aria-label="Shaded preview"><Gem fill="#d4120e" dark="#7c0d0a" /></StripButton>
              <Divider $gap={5} />
              <StripButton $w={25} aria-label="Selected preview"><Gem fill="#3aa61d" dark="#2a6d1a"><path d="M2 9l8 10-6-1-2-5z" fill="#ddd" /></Gem></StripButton>
              <StripButton $w={24} aria-label="Document preview"><Ball left="#f5b113" right="#e9e9e9" stroke="#8a5a10" /></StripButton>
              <Divider $gap={2} />
              <StripButton $w={22} aria-label="Mesh quality"><Ball left="#69aef0" right="#4d97e4" stroke="#1c4b91" /></StripButton>
              <StripButton $w={8} aria-label="Mesh options"><Caret /></StripButton>
            </RightTools>
          </ToolStrip>
          <Canvas />
        </Editor>
        <ToolRail>
          <Grip />
          {toolSections.map((section, i) => (
            <ToolSection key={i}>
              {section.map(([name, icon, more = true]) => (
                <IconButton key={name} aria-label={name}>
                  <svg width="24" height="24" viewBox="0 0 24 24" fill="none" stroke="#222">
                    {icon}
                    {more && <path d="M23 17v5h-5z" fill="#666" stroke="none" />}
                  </svg>
                </IconButton>
              ))}
            </ToolSection>
          ))}
        </ToolRail>
        <Rhino>
          {views.map((view) => (
            <View key={view.name}>
              {view.drawing}
              <ViewTab $active={view.active}>
                {view.name}
                <svg width="13" height="17" viewBox="0 0 13 17"><path d="M2 6h7l-3.500 4z" fill="#333" /></svg>
              </ViewTab>
            </View>
          ))}
        </Rhino>
      </Desktop>
    </>
  );
};

export default App;
